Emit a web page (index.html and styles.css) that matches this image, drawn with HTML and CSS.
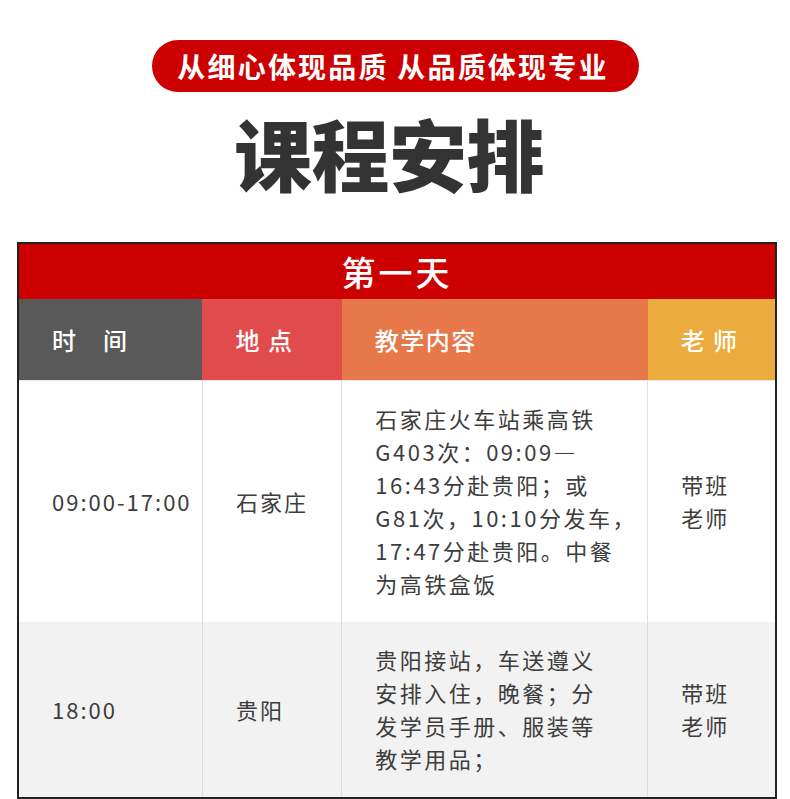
FILE: index.html
```html
<!DOCTYPE html>
<html lang="zh">
<head>
<meta charset="utf-8">
<link rel="stylesheet" href="styles.css">
</head>
<body>
<div class="page">
  <div class="slogan-wrap"><div class="slogan">从细心体现品质 从品质体现专业</div></div>
  <h1 class="title">课程安排</h1>
  <table class="schedule">
    <colgroup>
      <col class="c1"><col class="c2"><col class="c3"><col class="c4">
    </colgroup>
    <thead>
      <tr><th class="day" colspan="4">第一天</th></tr>
      <tr class="heads">
        <th class="h-time">时　间</th>
        <th class="h-place">地 点</th>
        <th class="h-content">教学内容</th>
        <th class="h-teacher">老 师</th>
      </tr>
    </thead>
    <tbody>
      <tr class="row r1">
        <td>09:00-17:00</td>
        <td>石家庄</td>
        <td class="content">石家庄火车站乘高铁<br>G403次：09:09—<br>16:43分赴贵阳；或<br>G81次，10:10分发车，<br>17:47分赴贵阳。中餐<br>为高铁盒饭</td>
        <td>带班<br>老师</td>
      </tr>
      <tr class="row r2">
        <td>18:00</td>
        <td>贵阳</td>
        <td class="content">贵阳接站，车送遵义<br>安排入住，晚餐；分<br>发学员手册、服装等<br>教学用品；</td>
        <td>带班<br>老师</td>
      </tr>
    </tbody>
  </table>
</div>
</body>
</html>
```
FILE: styles.css
```css
html, body {
  margin: 0;
  padding: 0;
  background: #ffffff;
}
body {
  font-family: "Noto Sans CJK SC", "Noto Sans", sans-serif;
  color: #3d3d3d;
}
.page {
  width: 790px;
  padding-top: 40px;
}
.slogan-wrap {
  display: flex;
  justify-content: center;
}
.slogan {
  width: 487px;
  height: 52px;
  border-radius: 26px;
  background: #cc0000;
  color: #ffffff;
  font-size: 28px;
  font-weight: 700;
  letter-spacing: 2.2px;
  line-height: 52px;
  text-align: center;
  white-space: nowrap;
  box-sizing: border-box;
  padding-right: 4px;
}
.title {
  margin: 20px 0 50px;
  height: 80px;
  line-height: 80px;
  font-size: 78px;
  font-weight: 900;
  color: #333333;
  text-align: center;
  letter-spacing: -0.5px;
  padding-right: 12px;
}
.schedule {
  margin-left: 17px;
  width: 760px;
  border-collapse: collapse;
  border: 2px solid #222222;
  table-layout: fixed;
}
.c1 { width: 184px; }
.c2 { width: 139px; }
.c3 { width: 305px; }
.c4 { width: 128px; }
.schedule th {
  padding: 0;
  color: #ffffff;
}
.day {
  background: #cc0000;
  height: 55px;
  font-size: 34px;
  font-weight: 500;
  text-align: center;
  letter-spacing: 3px;
}
.heads th {
  height: 81px;
  font-size: 24px;
  font-weight: 500;
  text-align: left;
  padding-left: 33px;
  letter-spacing: 1.5px;
}
.h-time { background: #595959; }
.h-place { background: #e04b4b; }
.h-content { background: #e6784a; }
.h-teacher { background: #ecab3e; }
.row td {
  font-size: 22px;
  line-height: 33px;
  letter-spacing: 2px;
  padding: 21px 0 21px 33px;
  border-left: 1px solid #dddddd;
  vertical-align: middle;
  white-space: nowrap;
}
.row td.content { letter-spacing: 2.5px; }
.row td:first-child { border-left: none; }
.r1 { background: #ffffff; height: 241px; }
.r1 td { border-top: 1px solid #e8e8e8; }
.r2 { background: #f2f2f2; height: 176px; }
```
